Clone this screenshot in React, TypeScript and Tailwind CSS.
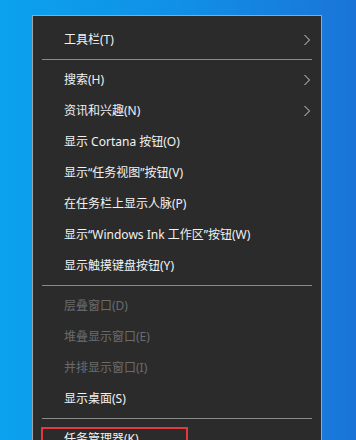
import React from "react";

type Item = { label: string; arrow?: boolean; disabled?: boolean };

const Chevron = () => (
  <svg width="8" height="12" viewBox="0 0 8 12" className="mr-[10px]">
    <polyline points="1.5,1 6.5,6 1.5,11" fill="none" stroke="#d4d4d4" strokeWidth="1" />
  </svg>
);

const Row = ({ item }: { item: Item }) => (
  <div className="h-[31px] flex items-center justify-between pl-[31px]">
    <span className={item.disabled ? "text-[#6b6b6b]" : "text-[#f2f2f2]"}>{item.label}</span>
    {item.arrow && <Chevron />}
  </div>
);

const Sep = () => (
  <div className="h-[9px] flex items-center px-[9px]">
    <div className="h-px w-full bg-[#8a8a8a]" />
  </div>
);

const App = () => {
  const group1: Item[] = [
    { label: "搜索(H)", arrow: true },
    { label: "资讯和兴趣(N)", arrow: true },
    { label: "显示 Cortana 按钮(O)" },
    { label: "显示“任务视图”按钮(V)" },
    { label: "在任务栏上显示人脉(P)" },
    { label: "显示“Windows Ink 工作区”按钮(W)" },
    { label: "显示触摸键盘按钮(Y)" },
  ];
  const group2: Item[] = [
    { label: "层叠窗口(D)", disabled: true },
    { label: "堆叠显示窗口(E)", disabled: true },
    { label: "并排显示窗口(I)", disabled: true },
    { label: "显示桌面(S)" },
  ];

  return (
    <div
      className="w-[356px] h-[440px] overflow-hidden bg-gradient-to-r from-[#0ba2ee] via-[#1090e6] to-[#1a74d8] pt-[15px] pl-[32px]"
      style={{ fontFamily: '"Noto Sans", "Noto Sans CJK SC", sans-serif' }}
    >
      <div className="w-[290px] bg-[#2b2b2b] border border-[#a3a3a3] pt-[8px] pb-[20px] text-[12px] leading-none">
        <Row item={{ label: "工具栏(T)", arrow: true }} />
        <Sep />
        {group1.map((it) => (
          <Row key={it.label} item={it} />
        ))}
        <Sep />
        {group2.map((it) => (
          <Row key={it.label} item={it} />
        ))}
        <Sep />
        <div className="relative">
          <Row item={{ label: "任务管理器(K)" }} />
          {/* red highlight */}
          <div className="absolute left-[8px] top-[4px] w-[147px] h-[30px] border-2 border-[#e2383e]" />
        </div>
        <Row item={{ label: "锁定任务栏(L)" }} />
      </div>
    </div>
  );
};

export default App;
